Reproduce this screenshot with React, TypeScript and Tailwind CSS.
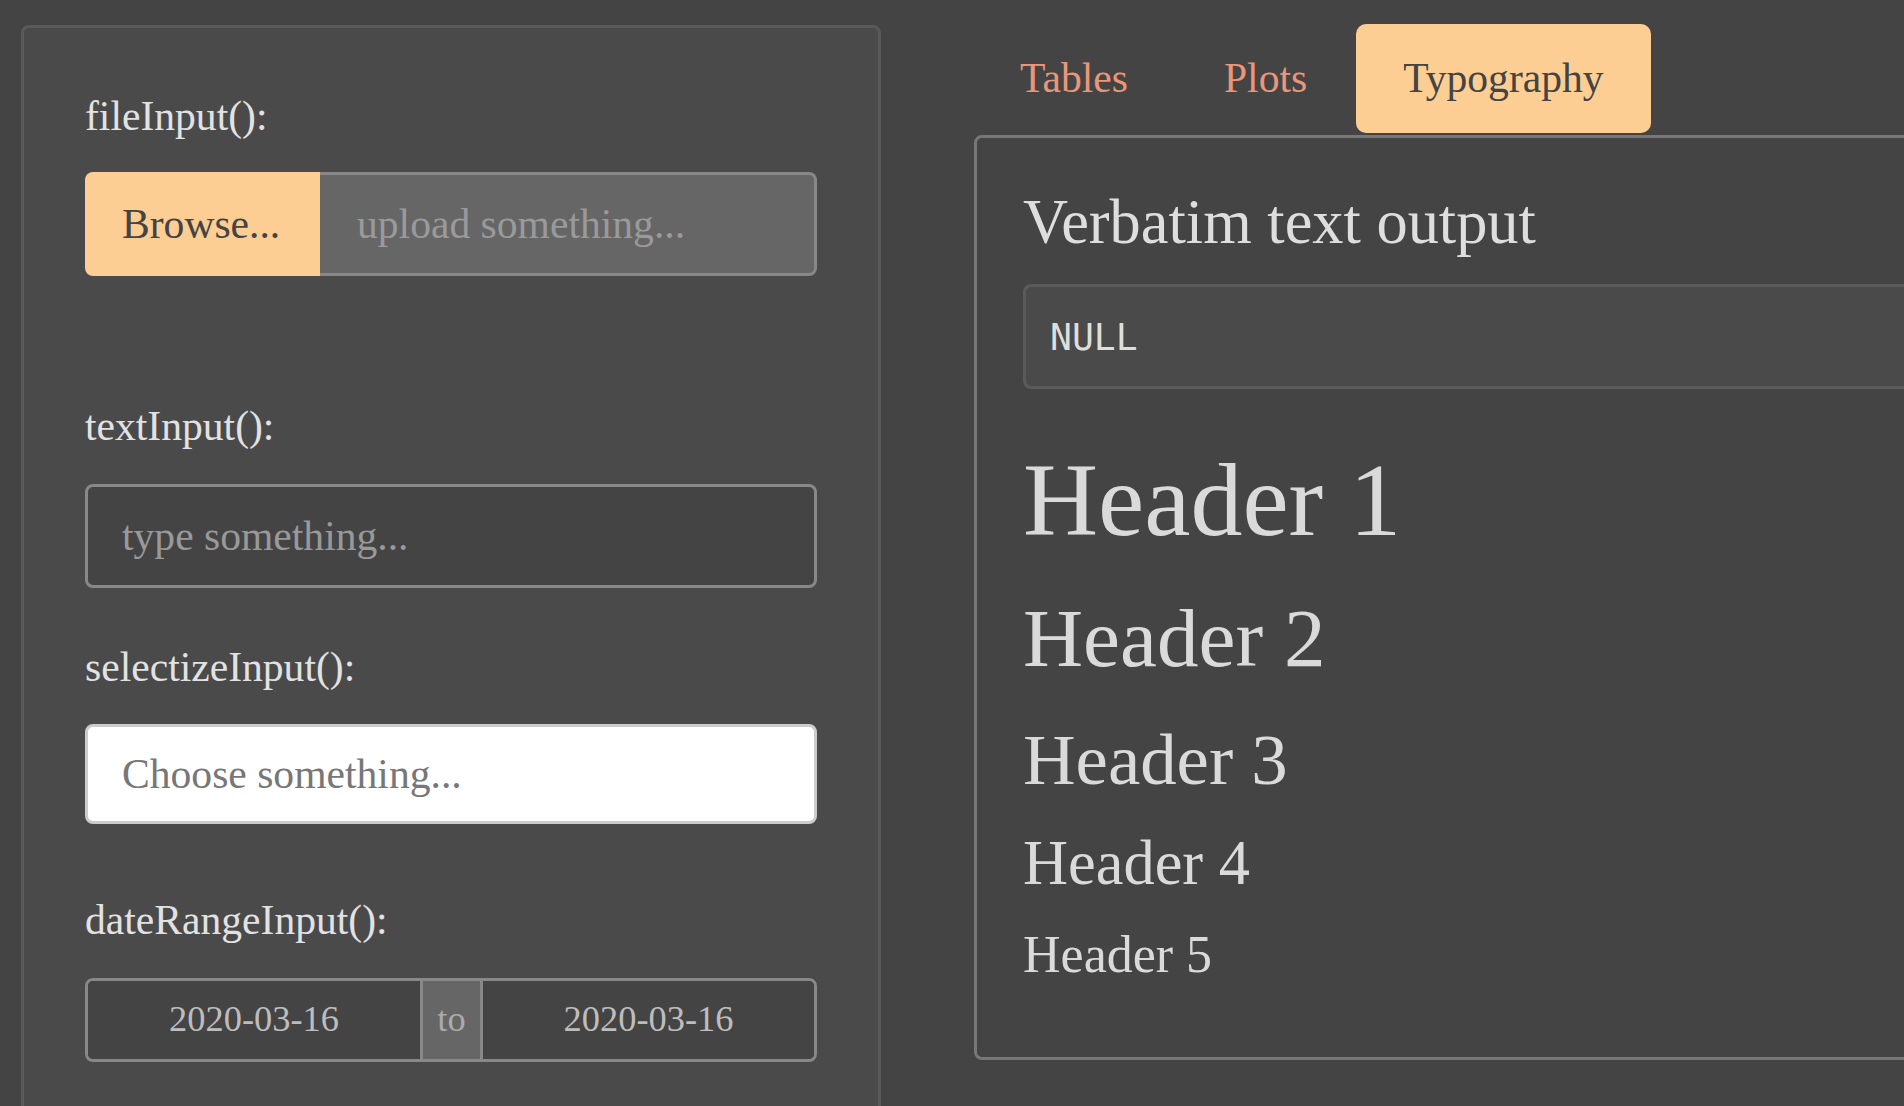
import React from 'react';

const serif = "font-['Liberation_Serif','Times_New_Roman',serif]";

const Label: React.FC<{ text: string; className?: string }> = ({ text, className = '' }) => (
  <div className={`text-[41.6px] leading-[1.5] text-[#e2e2e2] ${className}`}>{text}</div>
);

const tabs = ['Tables', 'Plots', 'Typography'];

const headers = [
  { text: 'Header 1', cls: 'text-[104px] mt-[49px] mb-[26px]' },
  { text: 'Header 2', cls: 'text-[83.2px] mb-[27px]' },
  { text: 'Header 3', cls: 'text-[72.8px] mb-[23px]' },
  { text: 'Header 4', cls: 'text-[62.4px] mb-[23px]' },
  { text: 'Header 5', cls: 'text-[52px]' },
];

export default function App() {
  return (
    <div className={`${serif} flex h-[1106px] w-full overflow-hidden bg-[#444444]`}>
      {/* sidebar well */}
      <div className="w-[880px] shrink-0 pl-[21px] pt-[25px]">
        <div className="h-[1200px] w-[860px] rounded-[8px] border-[3px] border-[#595959] bg-[#4a4a4a] pl-[61px] pr-[61px] pt-[57px]">
          <Label text="fileInput():" className="mb-[25px]" />
          <div className="flex h-[104px]">
            <div className="flex w-[235px] items-center rounded-l-[8px] bg-[#fdce93] pl-[37px] text-[41.6px] leading-[1.5] text-[#444]">
              Browse...
            </div>
            <div className="flex flex-1 items-center rounded-r-[8px] border-y-[3px] border-r-[3px] border-[#888] bg-[#666] pl-[37px] text-[41.6px] leading-[1.5] text-[#9a9a9a]">
              upload something...
            </div>
          </div>

          <Label text="textInput():" className="mt-[119px] mb-[26px]" />
          <div className="flex h-[104px] items-center rounded-[8px] border-[3px] border-[#888] bg-[#444] pl-[34px] text-[41.6px] leading-[1.5] text-[#999]">
            type something...
          </div>

          <Label text="selectizeInput():" className="mt-[48px] mb-[26px]" />
          <div className="flex h-[100px] items-center rounded-[8px] border-[3px] border-[#cccccc] bg-white pl-[34px] text-[41.6px] leading-[1.5] text-[#777]">
            Choose something...
          </div>

          <Label text="dateRangeInput():" className="mt-[65px] mb-[26px]" />
          <div className="flex h-[84px] overflow-hidden rounded-[8px] border-[3px] border-[#888] text-[36.4px] leading-[1.5]">
            <div className="flex w-[332px] items-center justify-center bg-[#444] text-[#bdbdbd]">2020-03-16</div>
            <div className="flex w-[63px] items-center justify-center border-x-[3px] border-[#888] bg-[#666] text-[#aaa]">to</div>
            <div className="flex flex-1 items-center justify-center bg-[#444] text-[#bdbdbd]">2020-03-16</div>
          </div>
        </div>
      </div>

      {/* main panel */}
      <div className="ml-[93px] min-w-0 flex-1 pt-[24px]">
        <div className="flex gap-[2px]">
          {tabs.map((t) => (
            <div
              key={t}
              className={`flex h-[109px] items-center rounded-[10px] px-[47px] text-[41.6px] leading-[1.5] ${
                t === 'Typography' ? 'bg-[#fdce93] text-[#444]' : 'text-[#e9967a]'
              }`}
            >
              {t}
            </div>
          ))}
        </div>

        <div className="ml-[1px] mt-[2px] h-[925px] w-[1100px] rounded-[8px] border-[3px] border-[#777] pl-[46px] pr-[40px] pt-[47px]">
          <h3 className="mb-[24px] text-[62.4px] leading-[1.2] text-[#dedede]">Verbatim text output</h3>
          <pre className="h-[105px] rounded-[8px] border-[3px] border-[#5a5a5a] bg-[#4a4a4a] pl-[24px] pt-[24px] font-['DejaVu_Sans_Mono',monospace] text-[36.4px] leading-[1.5] text-[#dedede]">
            NULL
          </pre>
          {headers.map((h) => (
            <div key={h.text} className={`leading-[1.2] text-[#dadada] ${h.cls}`}>
              {h.text}
            </div>
          ))}
        </div>
      </div>
    </div>
  );
}
